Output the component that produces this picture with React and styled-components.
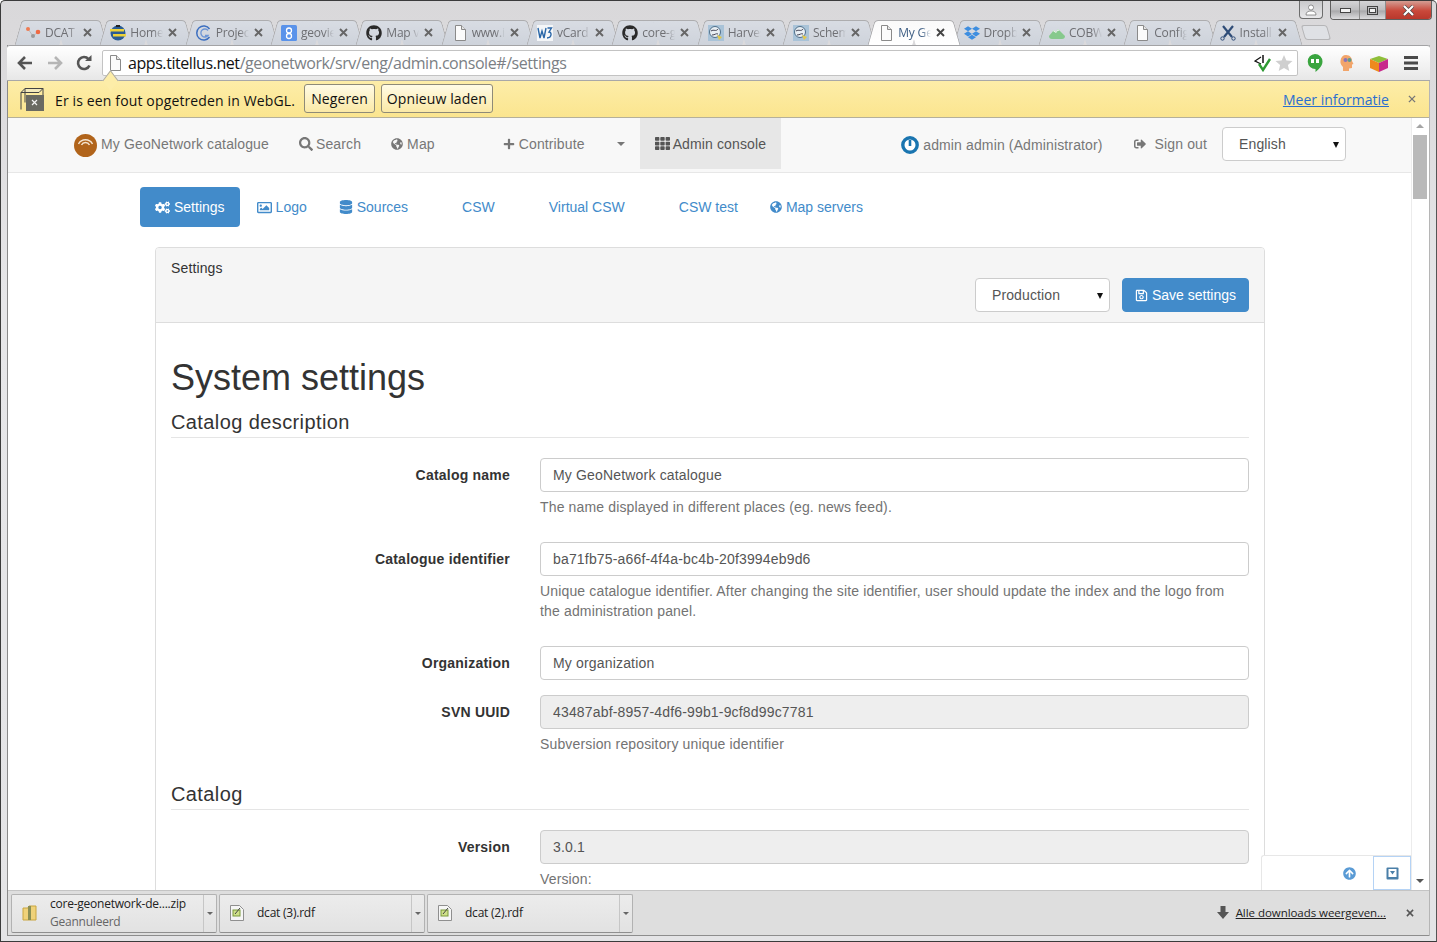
import React from 'react';
import styled, { createGlobalStyle } from 'styled-components';
import {
  FaSearch, FaPlus, FaTh, FaCogs, FaRegImage, FaDatabase, FaGlobeAmericas,
  FaRegSave, FaSignOutAlt, FaArrowCircleUp, FaGithub, FaDropbox,
} from 'react-icons/fa';

const GlobalStyle = createGlobalStyle`
  html, body { margin: 0; padding: 0; height: 100%; overflow: hidden; }
  * { box-sizing: border-box; }
`;

const UI_FONT = '"Open Sans", "Noto Sans", sans-serif';
const PAGE_FONT = '"Liberation Sans", Arial, sans-serif';

const Window = styled.div`
  width: 1437px;
  height: 942px;
  display: flex;
  flex-direction: column;
  background: linear-gradient(#d9d8da 0, #dedddf 120px, #e6e6e8 300px, #e4e4e6 100%);
  border: 1px solid #3b3b3b;
  border-right-color: #555;
  border-radius: 5px 5px 0 0;
  overflow: hidden;
  font-family: ${UI_FONT};
`;

const TitleRow = styled.div`
  height: 19px;
  display: flex;
  justify-content: flex-end;
  padding-right: 4px;
  flex-shrink: 0;
`;

const ProfileButton = styled.div`
  width: 24px;
  height: 18px;
  margin-right: 7px;
  border: 1px solid #6d6d6d;
  border-top: 0;
  border-radius: 0 0 4px 4px;
  background: linear-gradient(#c9c9cb, #e8e8ea);
  display: flex;
  align-items: center;
  justify-content: center;
`;

const WindowControls = styled.div`
  display: flex;
  height: 19px;
  border: 1px solid #5f5f5f;
  border-top: 0;
  border-radius: 0 0 4px 4px;
  overflow: hidden;
`;

const WindowControl = styled.div`
  width: ${(props) => props.$width}px;
  display: flex;
  align-items: center;
  justify-content: center;
  border-left: ${(props) => (props.$first ? '0' : '1px solid #8d8d8d')};
  background: ${(props) =>
    props.$close
      ? 'linear-gradient(#d59d93, #c9483a 55%, #b9382c)'
      : 'linear-gradient(#d5d5d7, #bcbcbe 50%, #a8a8aa 55%, #dcdcde)'};
`;

const TabStrip = styled.div`
  height: 25px;
  display: flex;
  padding-left: 15px;
  flex-shrink: 0;
  position: relative;
  z-index: 1;
`;

const TabShell = styled.div`
  width: 85.33px;
  height: 25px;
  position: relative;
  isolation: isolate;
  display: flex;
  align-items: center;
  padding-left: 9px;
  z-index: ${(props) => (props.$active ? 2 : 1)};
  margin-bottom: ${(props) => (props.$active ? '-1px' : '0')};

  &::before, &::after {
    content: '';
    position: absolute;
    top: 0;
    bottom: 0;
    width: 52%;
    z-index: -1;
    background: ${(props) => (props.$active ? 'linear-gradient(#fafafa, #fff)' : 'linear-gradient(#d8dce3, #ced3db)')};
    border-top: 1px solid #adadaf;
  }
  &::before {
    left: 2px;
    transform: skewX(-16deg);
    border-left: 1px solid #adadaf;
    border-radius: 4px 0 0 0;
  }
  &::after {
    right: -3px;
    transform: skewX(16deg);
    border-right: 1px solid #adadaf;
    border-radius: 0 4px 0 0;
  }
`;

const Favicon = styled.span`
  width: 16px;
  height: 16px;
  display: flex;
  flex-shrink: 0;
  align-items: center;
  justify-content: center;
  color: ${(props) => props.$color || '#2a2a2a'};
  font-size: 16px;
`;

const TabTitle = styled.span`
  width: 33px;
  margin-left: 4px;
  overflow: hidden;
  white-space: nowrap;
  font-size: 12px;
  letter-spacing: -0.2px;
  color: ${(props) => (props.$active ? '#3f5f85' : '#6e6f73')};
  mask-image: linear-gradient(90deg, #000 70%, transparent);
`;

const CloseMark = styled.svg`
  margin-left: ${(props) => props.$gap}px;
  flex-shrink: 0;
`;

const NewTab = styled.div`
  width: 26px;
  height: 15px;
  margin: 5px 0 0 7px;
  background: #dfe1e5;
  border: 1px solid #b5b5b7;
  border-radius: 3px;
  transform: skewX(16deg);
`;

const Chrome = styled.div`
  flex: 1;
  min-height: 0;
  margin: 0 6px;
  display: flex;
  flex-direction: column;
  border-left: 1px solid #8a8a8a;
  border-right: 1px solid #b5b5b5;
`;

const Toolbar = styled.div`
  height: 36px;
  flex-shrink: 0;
  display: flex;
  align-items: center;
  padding: 0 8px;
  background: linear-gradient(#fff, #efefef 70%, #e7e7e7);
  border-top: 1px solid #a3a3a5;
  border-bottom: 1px solid #a8a8a8;
  border-radius: 3px 3px 0 0;
  margin: 0 -1px;
  position: relative;
`;

const NavButtons = styled.div`
  width: 87px;
  display: flex;
  align-items: center;
  gap: 9.5px;
  flex-shrink: 0;
`;

const Omnibox = styled.div`
  width: 1196px;
  height: 26px;
  display: flex;
  align-items: center;
  padding: 0 4px 0 5px;
  background: #fff;
  border: 1px solid #c3c3c3;
  border-radius: 2px;
  flex-shrink: 0;
`;

const Url = styled.span`
  margin-left: 6px;
  flex: 1;
  font-size: 16px;
  letter-spacing: -0.43px;
  white-space: nowrap;
  color: #7b7f85;
  b { font-weight: 400; color: #111; }
`;

const ValidatorSlot = styled.span`
  display: flex;
  margin-right: 3px;
`;

const Extensions = styled.div`
  display: flex;
  align-items: center;
  margin-left: 1px;
`;

const ExtensionSlot = styled.span`
  width: 32px;
  display: flex;
  align-items: center;
  justify-content: center;
`;

const InfoBar = styled.div`
  height: 37px;
  flex-shrink: 0;
  display: flex;
  align-items: center;
  padding: 0 13px 0 12px;
  background: linear-gradient(#fdeda8, #fbe58f);
  border-bottom: 1px solid #b5b09a;
  font-size: 14px;
  color: #111;
  position: relative;

  &::before {
    content: '';
    position: absolute;
    left: 96px;
    top: -7px;
    width: 12px;
    height: 12px;
    background: #fdeda8;
    border-left: 1px solid #a8a8a8;
    border-top: 1px solid #a8a8a8;
    transform: rotate(45deg) skew(8deg, 8deg);
  }
`;

const InfoText = styled.span`
  margin: 2px 9px 0 10px;
  letter-spacing: 0.14px;
  white-space: nowrap;
`;

const InfoButton = styled.div`
  height: 29px;
  margin: 0 6px 2px 0;
  padding: 0 ${(props) => props.$pad}px;
  display: flex;
  align-items: center;
  font-size: 14px;
  letter-spacing: 0.1px;
  color: #111;
  border: 1px solid #8e8a78;
  border-radius: 3px;
  background: linear-gradient(#fffbe6, #fbe9a6);
`;

const InfoLink = styled.span`
  margin-left: auto;
  margin-right: 11px;
  color: #2a6fd0;
  font-size: 14px;
  letter-spacing: 0.02px;
  text-decoration: underline;
`;

const PageArea = styled.div`
  flex: 1;
  min-height: 0;
  display: flex;
  background: #fff;
`;

const Page = styled.div`
  width: 1404px;
  position: relative;
  overflow: hidden;
  font-family: ${PAGE_FONT};
  font-size: 14px;
  line-height: 20px;
  letter-spacing: 0.13px;
  color: #333;
`;

const Scrollbar = styled.div`
  width: 18px;
  flex-shrink: 0;
  position: relative;
  background: #fff;
  border-left: 1px solid #ececec;
  padding: 17px 2px 0 1px;
  display: flex;
  flex-direction: column;
`;

const ScrollThumb = styled.div`
  width: 14px;
  height: 64px;
  background: #b9b9b9;
`;

const ScrollArrow = styled.span`
  position: absolute;
  left: 4px;
  width: 0;
  height: 0;
  border-left: 4px solid transparent;
  border-right: 4px solid transparent;
  ${(props) =>
    props.$up
      ? 'top: 6px; border-bottom: 4px solid #a5a5a5;'
      : 'bottom: 7px; border-top: 4px solid #555;'}
`;

const Navbar = styled.nav`
  height: 55px;
  display: flex;
  align-items: flex-start;
  padding: 0 65px 0 51px;
  background: #f8f8f8;
  border-bottom: 1px solid #e7e7e7;
`;

const NavItem = styled.a`
  height: ${(props) => (props.$active ? '51px' : '52px')};
  display: flex;
  align-items: center;
  gap: ${(props) => props.$gap || 4}px;
  padding: ${(props) => (props.$low ? '2px' : '0')} 15px 0 15px;
  margin-left: ${(props) => props.$offset || 0}px;
  color: ${(props) => (props.$active ? '#555' : '#777')};
  background: ${(props) => (props.$active ? '#e7e7e7' : 'transparent')};
  white-space: nowrap;
  svg { flex-shrink: 0; }
`;

const NavCaret = styled.span`
  width: 40px;
  height: 52px;
  display: flex;
  align-items: center;
  justify-content: center;
  padding-left: 2px;

  &::after {
    content: '';
    border-left: 4px solid transparent;
    border-right: 4px solid transparent;
    border-top: 4px solid #777;
  }
`;

const LogoMark = styled.span`
  width: 23px;
  height: 23px;
  margin-top: 2px;
  display: block;
`;

const NavRight = styled.div`
  margin-left: auto;
  display: flex;
  align-items: flex-start;
`;

const SelectBox = styled.div`
  position: relative;
  width: ${(props) => props.$width}px;
  height: 34px;
  padding: 0 ${(props) => props.$pad}px;
  display: flex;
  align-items: center;
  color: #555;
  background: #fff;
  border: 1px solid #ccc;
  border-radius: 4px;
  margin-top: ${(props) => props.$top || 0}px;

  &::after {
    content: '';
    position: absolute;
    right: 6px;
    top: 14px;
    border-left: 3.5px solid transparent;
    border-right: 3.5px solid transparent;
    border-top: 6px solid #111;
  }
`;

const SubNav = styled.div`
  display: flex;
  gap: 2px;
  padding-left: 132px;
  margin-top: 14px;
  letter-spacing: 0;
`;

const Pill = styled.a`
  height: 40px;
  display: flex;
  align-items: center;
  gap: 4px;
  padding: 0 15px 0 ${(props) => (props.$indent ? 37 : 15)}px;
  border-radius: 4px;
  color: ${(props) => (props.$active ? '#fff' : '#428bca')};
  background: ${(props) => (props.$active ? '#428bca' : 'transparent')};
`;

const Panel = styled.section`
  width: 1110px;
  margin: 20px 0 0 147px;
  border: 1px solid #ddd;
  border-radius: 4px;
`;

const PanelHeading = styled.div`
  height: 75px;
  padding: 10px 15px;
  background: #f5f5f5;
  border-bottom: 1px solid #ddd;
  border-radius: 3px 3px 0 0;
`;

const HeadingActions = styled.div`
  display: flex;
  justify-content: flex-end;
  gap: 12px;
`;

const SaveButton = styled.button`
  height: 34px;
  padding: 0 12px;
  display: flex;
  align-items: center;
  gap: 4px;
  font: 14px ${PAGE_FONT};
  color: #fff;
  background: #428bca;
  border: 1px solid #428bca;
  border-radius: 4px;
`;

const PanelBody = styled.div`
  padding: 15px;
`;

const Title = styled.h1`
  margin: 20px 0 10px;
  font-size: 36px;
  font-weight: 500;
  line-height: 40px;
  letter-spacing: 0;
  color: #333;
`;

const Legend = styled.h2`
  margin: ${(props) => props.$top || 0}px 0 20px;
  height: 30px;
  font-size: 20px;
  font-weight: 400;
  line-height: 29px;
  letter-spacing: 0.4px;
  color: #333;
  border-bottom: 1px solid #e5e5e5;
`;

const FormGroup = styled.div`
  display: grid;
  grid-template-columns: 339px 709px;
  column-gap: 30px;
  margin-bottom: 15px;
`;

const FieldLabel = styled.label`
  padding-top: 7px;
  text-align: right;
  font-weight: 700;
  letter-spacing: 0.22px;
`;

const TextField = styled.input`
  display: block;
  width: 100%;
  height: 34px;
  padding: 6px 12px;
  font: 14px/20px ${PAGE_FONT};
  letter-spacing: 0.17px;
  color: #555;
  background: ${(props) => (props.disabled ? '#eee' : '#fff')};
  border: 1px solid #ccc;
  border-radius: 4px;
  outline: none;
`;

const HelpBlock = styled.p`
  margin: 5px 0 10px;
  letter-spacing: 0.15px;
  color: #737373;
`;

const FloatingActions = styled.div`
  position: absolute;
  right: 0;
  bottom: 0;
  width: 150px;
  height: 35px;
  display: flex;
  justify-content: flex-end;
  background: #fff;
  border: 1px solid #e7e7e7;
  border-bottom: 0;
  border-right: 0;
  border-radius: 3px 0 0 0;
`;

const FloatingButton = styled.a`
  width: ${(props) => props.$width}px;
  display: flex;
  align-items: center;
  justify-content: center;
  color: #5a9bd5;
  border: ${(props) => (props.$focused ? '1px solid #b5d3f5' : '0')};
`;

const Shelf = styled.div`
  height: 46px;
  flex-shrink: 0;
  display: flex;
  align-items: center;
  gap: 2px;
  padding: 0 15px 0 3px;
  background: #dedede;
  border-top: 1px solid #c4c4c4;
  border-bottom: 1px solid #8d8d8d;
  color: #222;
  font-size: 12px;
`;

const DownloadItem = styled.div`
  width: 206px;
  height: 39px;
  display: flex;
  background: linear-gradient(#ececec, #e2e2e2);
  border: 1px solid #b2b2b2;
  border-bottom-color: #8f8f8f;
  border-radius: 2px;
`;

const DownloadMain = styled.div`
  flex: 1;
  display: flex;
  align-items: center;
  padding: 0 0 1px 10px;
  gap: 13px;
`;

const DownloadText = styled.div`
  display: flex;
  flex-direction: column;
  gap: 3px;
  letter-spacing: -0.23px;
  line-height: 15px;
  span + span { color: #666; }
`;

const DownloadCaret = styled.div`
  width: 13px;
  display: flex;
  align-items: center;
  justify-content: center;
  border-left: 1px solid #c6c6c6;

  &::after {
    content: '';
    border-left: 3px solid transparent;
    border-right: 3px solid transparent;
    border-top: 3px solid #666;
  }
`;

const ShelfLink = styled.span`
  margin: 0 10px 2px auto;
  display: flex;
  align-items: center;
  gap: 7px;
  letter-spacing: -0.05px;
  font-size: 11.5px;
  u { color: #222; }
`;

const FrameBottom = styled.div`
  height: 5px;
  flex-shrink: 0;
`;

const Cross = ({ color = '#555', size = 9, weight = 1.9, gap = 5 }) => (
  <CloseMark viewBox="0 0 9 9" width={size} height={size} $gap={gap}>
    <path d="M1 1l7 7M8 1l-7 7" stroke={color} strokeWidth={weight} fill="none" />
  </CloseMark>
);

const DocIcon = () => (
  <svg width="14" height="16" viewBox="0 0 14 16">
    <path d="M2.500.5h6l4 4v11h-10z" fill="#fbfbfb" stroke="#8a8a8a" />
    <path d="M8.500.5v4h4" fill="#e5e5e5" stroke="#8a8a8a" />
  </svg>
);

const DcatIcon = () => (
  <svg width="16" height="16" viewBox="0 0 16 16">
    <path d="M3 4l5 7 5-4" stroke="#bbb" strokeWidth="1" fill="none" />
    <circle cx="3" cy="4" r="2" fill="#ef7b52" />
    <circle cx="8" cy="11" r="2" fill="#9a9a9a" />
    <circle cx="13" cy="7" r="2.300" fill="#ef6a43" />
  </svg>
);

const HomeIcon = () => (
  <svg width="16" height="16" viewBox="0 0 16 16">
    <circle cx="8" cy="8" r="7.500" fill="#2a5c94" />
    <rect x="0" y="4" width="14" height="2.500" fill="#ecd23a" />
    <rect x="3" y="9" width="13" height="2.500" fill="#ecd23a" />
    <rect x="6" y="0" width="4" height="2" fill="#222" />
  </svg>
);

const GoogleCodeIcon = () => (
  <svg width="16" height="16" viewBox="0 0 16 16">
    <path d="M13.500 4A7 7 0 1 0 13.500 12" stroke="#3c6fc0" strokeWidth="1.500" fill="none" />
    <path d="M12 5.500A4 4 0 1 0 12 10.500H9" stroke="#6d95d5" strokeWidth="1.300" fill="none" />
  </svg>
);

const GoogleSearchIcon = () => (
  <svg width="16" height="16" viewBox="0 0 16 16">
    <rect width="16" height="16" rx="1.500" fill="#5a93ea" />
    <circle cx="8" cy="5.500" r="2.500" stroke="#fff" strokeWidth="1.300" fill="none" />
    <circle cx="8" cy="11" r="2.500" stroke="#fff" strokeWidth="1.300" fill="none" />
  </svg>
);

const W3Icon = () => (
  <svg width="16" height="16" viewBox="0 0 16 16">
    <rect width="16" height="16" fill="#f4f6f8" />
    <path d="M1 3l2 10 2-7 2 7 2-10" stroke="#2a67a8" strokeWidth="1.400" fill="none" />
    <path d="M10.500 3h4l-2.500 4c3 0 3 6-2 6" stroke="#2a67a8" strokeWidth="1.400" fill="none" />
  </svg>
);

const EarthIcon = () => (
  <svg width="16" height="16" viewBox="0 0 16 16">
    <rect width="16" height="16" fill="#a9c3d8" />
    <circle cx="7" cy="7" r="5.500" fill="#e8eef3" stroke="#4f6f8a" />
    <path d="M3 6c3-2 5 1 7-2M4 10c3 0 4-2 6-1" stroke="#445" fill="none" />
    <path d="M9 10l5 2-3 3z" fill="#e3c84a" />
  </svg>
);

const CobvIcon = () => (
  <svg width="16" height="16" viewBox="0 0 16 16">
    <path d="M0 11l5-6 2 2 2-3 7 7c0 2-1 3-3 3H3c-2 0-3-1-3-3z" fill="#86c98c" />
    <path d="M4 6l1-1 2 2 2-3 1.500 1.500-2 .5L7 8z" fill="#eef7ef" />
  </svg>
);

const ScissorsIcon = () => (
  <svg width="16" height="16" viewBox="0 0 16 16">
    <path d="M3 1l9 11M13 1L4 12" stroke="#2f4d78" strokeWidth="2.200" fill="none" />
    <circle cx="2.500" cy="13.500" r="1.700" fill="none" stroke="#2f4d78" />
    <circle cx="13.500" cy="13.500" r="1.700" fill="none" stroke="#2f4d78" />
  </svg>
);

const tabs = [
  { title: 'DCAT', icon: <DcatIcon /> },
  { title: 'Home', icon: <HomeIcon /> },
  { title: 'Project', icon: <GoogleCodeIcon /> },
  { title: 'geoviewer', icon: <GoogleSearchIcon /> },
  { title: 'Map view', icon: <FaGithub /> },
  { title: 'www.iso', icon: <DocIcon /> },
  { title: 'vCard', icon: <W3Icon /> },
  { title: 'core-geo', icon: <FaGithub /> },
  { title: 'Harvest', icon: <EarthIcon /> },
  { title: 'Schema', icon: <EarthIcon /> },
  { title: 'My GeoN', icon: <DocIcon />, active: true },
  { title: 'Dropbox', icon: <FaDropbox />, color: '#3d8ee0' },
  { title: 'COBWeb', icon: <CobvIcon /> },
  { title: 'Config', icon: <DocIcon /> },
  { title: 'Install', icon: <ScissorsIcon /> },
];

const BackIcon = ({ color }) => (
  <svg width="20" height="20" viewBox="0 0 20 20">
    <path d="M17 10H5M10 4l-6 6 6 6" stroke={color} strokeWidth="2.600" fill="none" />
  </svg>
);

const ForwardIcon = ({ color }) => (
  <svg width="20" height="20" viewBox="0 0 20 20">
    <path d="M3 10h12M10 4l6 6-6 6" stroke={color} strokeWidth="2.600" fill="none" />
  </svg>
);

const ReloadIcon = () => (
  <svg width="20" height="20" viewBox="0 0 20 20">
    <path d="M15.500 12.500A6 6 0 1 1 14.500 6" stroke="#555" strokeWidth="2.600" fill="none" />
    <path d="M11 8h6.500V2z" fill="#555" />
  </svg>
);

const ValidatorIcon = () => (
  <svg width="18" height="18" viewBox="0 0 18 18">
    <path d="M7 3L1 7l6 3" stroke="#111" strokeWidth="1.200" fill="none" />
    <path d="M9 1v8" stroke="#111" strokeWidth="1.500" />
    <path d="M5 10l4 6 7-11" stroke="#2f9a34" strokeWidth="2.400" fill="none" />
  </svg>
);

const StarIcon = () => (
  <svg width="18" height="18" viewBox="0 0 18 18">
    <path d="M9 1l2.400 5.600 6.100.5-4.600 4 1.400 6L9 14l-5.300 3.100 1.400-6-4.600-4 6.100-.5z" fill="#cfcfcf" />
  </svg>
);

const HangoutsIcon = () => (
  <svg width="16" height="19" viewBox="0 0 16 19">
    <path d="M8 0a7.500 7.500 0 0 1 7.500 7.500c0 4.500-4 8-7 10.500v-3A7.500 7.500 0 0 1 8 0z" fill="#3aa53f" />
    <rect x="4" y="5" width="3" height="4" fill="#fff" />
    <rect x="9" y="5" width="3" height="4" fill="#fff" />
  </svg>
);

const HeadIcon = () => (
  <svg width="18" height="18" viewBox="0 0 18 18">
    <path d="M8 1c4 0 6 3 6 6l1.500 3-1.500.5V14l-3 .5V17H5v-4C3 11 2 9 2.500 6.500 3 3 5 1 8 1z" fill="#f2a56a" />
    <circle cx="7.500" cy="6" r="2" fill="#8a74b8" />
    <circle cx="11.500" cy="6" r="2" fill="#5f9c8a" />
  </svg>
);

const BoxIcon = () => (
  <svg width="20" height="20" viewBox="0 0 20 20">
    <path d="M1 6l9-3 9 3-9 4z" fill="#8fbf3a" />
    <path d="M1 6l9 4v9l-9-4z" fill="#ee8a1e" />
    <path d="M19 6l-9 4v9l9-4z" fill="#c82a8c" />
  </svg>
);

const MenuIcon = () => (
  <svg width="14" height="14" viewBox="0 0 14 14">
    <rect width="14" height="3" fill="#4a4a4a" />
    <rect y="5.500" width="14" height="3" fill="#4a4a4a" />
    <rect y="11" width="14" height="3" fill="#4a4a4a" />
  </svg>
);

const GlIcon = () => (
  <svg width="25" height="25" viewBox="0 0 25 25">
    <path d="M1 5.500h18l4-4H5zM1 5.500v17M5 1.500v14" stroke="#444" fill="#f3e9bb" />
    <path d="M23 1.500v14" stroke="#444" />
    <rect x="6" y="8" width="18" height="16" fill="#6a6a62" />
    <path d="M12 13l5 5M17 13l-5 5" stroke="#f3f3f3" strokeWidth="1.200" />
  </svg>
);

const GeoLogo = () => (
  <LogoMark>
    <svg width="23" height="23" viewBox="0 0 23 23">
      <circle cx="11.500" cy="11.500" r="11.500" fill="#b1641b" />
      <path d="M4.500 10a8 8 0 0 1 14 0M7.500 11a4.500 4.500 0 0 1 8 0" stroke="#f5e4d0" strokeWidth="1.500" fill="none" />
    </svg>
  </LogoMark>
);

const PowerIcon = () => (
  <svg width="18" height="18" viewBox="0 0 18 18">
    <circle cx="9" cy="9" r="7.200" stroke="#1a75b0" strokeWidth="3.400" fill="#fff" />
    <path d="M9 4v6" stroke="#1a75b0" strokeWidth="2.600" />
  </svg>
);

const ZipIcon = () => (
  <svg width="15" height="18" viewBox="0 0 15 18">
    <path d="M1 4h5l1-2h7v14H1z" fill="#efd27a" stroke="#c9a640" />
    <rect x="6" y="2" width="3" height="14" fill="#8a8f55" />
  </svg>
);

const RdfIcon = () => (
  <svg width="14" height="18" viewBox="0 0 14 18">
    <path d="M.5 1.500h9l4 4v11H.5z" fill="#f6f6f6" stroke="#8f8f8f" />
    <rect x="3" y="6" width="7" height="6" fill="#cfe08a" stroke="#7a9a3a" />
    <path d="M5 10l5-6" stroke="#444" />
  </svg>
);

const DownloadArrow = () => (
  <svg width="12" height="13" viewBox="0 0 12 13">
    <path d="M3.500 0h5v6H12l-6 7-6-7h3.500z" fill="#555" />
  </svg>
);

const BottomIcon = () => (
  <svg width="13" height="13" viewBox="0 0 13 13">
    <rect x=".5" y="0.500" width="12" height="12" rx="1" fill="#4a7fa8" />
    <rect x="2.500" y="2" width="8" height="8" fill="#fff" />
    <path d="M4 4h5L6.500 7.500z" fill="#4a7fa8" />
  </svg>
);

const Field = ({ label, value, disabled, help }) => (
  <FormGroup>
    <FieldLabel>{label}</FieldLabel>
    <div>
      <TextField value={value} disabled={disabled} readOnly />
      {help && <HelpBlock>{help}</HelpBlock>}
    </div>
  </FormGroup>
);

const downloads = [
  { name: 'core-geonetwork-de....zip', status: 'Geannuleerd', icon: <ZipIcon /> },
  { name: 'dcat (3).rdf', icon: <RdfIcon /> },
  { name: 'dcat (2).rdf', icon: <RdfIcon /> },
];

export default function App() {
  return (
    <Window>
      <GlobalStyle />
      <TitleRow>
        <ProfileButton>
          <svg width="12" height="12" viewBox="0 0 12 12">
            <circle cx="6" cy="3.500" r="2.500" fill="#fff" stroke="#555" strokeWidth=".6" />
            <path d="M1 11c0-3 2-4 5-4s5 1 5 4z" fill="#fff" stroke="#555" strokeWidth=".6" />
          </svg>
        </ProfileButton>
        <WindowControls>
          <WindowControl $width={28} $first>
            <svg width="11" height="5" viewBox="0 0 11 5">
              <rect x=".5" y=".5" width="10" height="4" fill="#f2f2f2" stroke="#444" />
            </svg>
          </WindowControl>
          <WindowControl $width={26}>
            <svg width="11" height="9" viewBox="0 0 11 9">
              <rect x=".5" y=".5" width="10" height="8" fill="none" stroke="#444" />
              <rect x="2.500" y="2.500" width="6" height="4" fill="#f2f2f2" stroke="#444" />
            </svg>
          </WindowControl>
          <WindowControl $width={46} $close>
            <svg width="13" height="11" viewBox="0 0 13 11">
              <path d="M2 1l9 9M11 1l-9 9" stroke="#444" strokeWidth="3.400" />
              <path d="M2 1l9 9M11 1l-9 9" stroke="#fff" strokeWidth="2.200" />
            </svg>
          </WindowControl>
        </WindowControls>
      </TitleRow>

      <TabStrip>
        {tabs.map((tab) => (
          <TabShell key={tab.title} $active={tab.active}>
            <Favicon $color={tab.color}>{tab.icon}</Favicon>
            <TabTitle $active={tab.active}>{tab.title}</TabTitle>
            <Cross color={tab.active ? '#444' : '#666'} />
          </TabShell>
        ))}
        <NewTab />
      </TabStrip>

      <Chrome>
        <Toolbar>
          <NavButtons>
            <BackIcon color="#555" />
            <ForwardIcon color="#b5b5b5" />
            <ReloadIcon />
          </NavButtons>
          <Omnibox>
            <DocIcon />
            <Url><b>apps.titellus.net</b>/geonetwork/srv/eng/admin.console#/settings</Url>
            <ValidatorSlot><ValidatorIcon /></ValidatorSlot>
            <StarIcon />
          </Omnibox>
          <Extensions>
            <ExtensionSlot><HangoutsIcon /></ExtensionSlot>
            <ExtensionSlot><HeadIcon /></ExtensionSlot>
            <ExtensionSlot><BoxIcon /></ExtensionSlot>
            <ExtensionSlot><MenuIcon /></ExtensionSlot>
          </Extensions>
        </Toolbar>

        <InfoBar>
          <GlIcon />
          <InfoText>Er is een fout opgetreden in WebGL.</InfoText>
          <InfoButton $pad={6}>Negeren</InfoButton>
          <InfoButton $pad={5}>Opnieuw laden</InfoButton>
          <InfoLink>Meer informatie</InfoLink>
          <Cross color="#777" size={8} weight={1.5} gap={8} />
        </InfoBar>

        <PageArea>
          <Page>
            <Navbar>
              <NavItem>
                <GeoLogo />
                My GeoNetwork catalogue
              </NavItem>
              <NavItem $gap={3}><FaSearch size={14} color="#777" />Search</NavItem>
              <NavItem><FaGlobeAmericas size={12} />Map</NavItem>
              <NavItem $offset={38}><FaPlus size={12} />Contribute</NavItem>
              <NavCaret />
              <NavItem $active $gap={3}><FaTh size={15} />Admin console</NavItem>
              <NavRight>
                <NavItem $low><PowerIcon />admin admin (Administrator)</NavItem>
                <NavItem $offset={1}>
                  <FaSignOutAlt size={12} style={{ marginRight: 5 }} />
                  Sign out
                </NavItem>
                <SelectBox $width={124} $pad={16} $top={9}>English</SelectBox>
              </NavRight>
            </Navbar>

            <SubNav>
              <Pill $active><FaCogs size={15} />Settings</Pill>
              <Pill><FaRegImage size={15} />Logo</Pill>
              <Pill><FaDatabase size={14} />Sources</Pill>
              <Pill $indent>CSW</Pill>
              <Pill $indent>Virtual CSW</Pill>
              <Pill $indent>CSW test</Pill>
              <Pill><FaGlobeAmericas size={12} />Map servers</Pill>
            </SubNav>

            <Panel>
              <PanelHeading>
                Settings
                <HeadingActions>
                  <SelectBox $width={135} $pad={16}>Production</SelectBox>
                  <SaveButton><FaRegSave size={13} />Save settings</SaveButton>
                </HeadingActions>
              </PanelHeading>
              <PanelBody>
                <Title>System settings</Title>
                <Legend>Catalog description</Legend>
                <Field
                  label="Catalog name"
                  value="My GeoNetwork catalogue"
                  help="The name displayed in different places (eg. news feed)."
                />
                <Field
                  label="Catalogue identifier"
                  value="ba71fb75-a66f-4f4a-bc4b-20f3994eb9d6"
                  help={
                    <>
                      Unique catalogue identifier. After changing the site identifier, user should update the index and the logo from
                      <br />
                      the administration panel.
                    </>
                  }
                />
                <Field label="Organization" value="My organization" />
                <Field
                  label="SVN UUID"
                  value="43487abf-8957-4df6-99b1-9cf8d99c7781"
                  disabled
                  help="Subversion repository unique identifier"
                />
                <Legend $top={16}>Catalog</Legend>
                <Field label="Version" value="3.0.1" disabled help="Version:" />
              </PanelBody>
            </Panel>

            <FloatingActions>
              <FloatingButton $width={48}><FaArrowCircleUp size={13} /></FloatingButton>
              <FloatingButton $width={38} $focused><BottomIcon /></FloatingButton>
            </FloatingActions>
          </Page>
          <Scrollbar>
            <ScrollArrow $up />
            <ScrollThumb />
            <ScrollArrow />
          </Scrollbar>
        </PageArea>

        <Shelf>
          {downloads.map((item) => (
            <DownloadItem key={item.name}>
              <DownloadMain>
                {item.icon}
                <DownloadText>
                  <span>{item.name}</span>
                  {item.status && <span>{item.status}</span>}
                </DownloadText>
              </DownloadMain>
              <DownloadCaret />
            </DownloadItem>
          ))}
          <ShelfLink>
            <DownloadArrow />
            <u>Alle downloads weergeven...</u>
          </ShelfLink>
          <Cross color="#555" size={8} weight={1.7} gap={8} />
        </Shelf>
      </Chrome>
      <FrameBottom />
    </Window>
  );
}
